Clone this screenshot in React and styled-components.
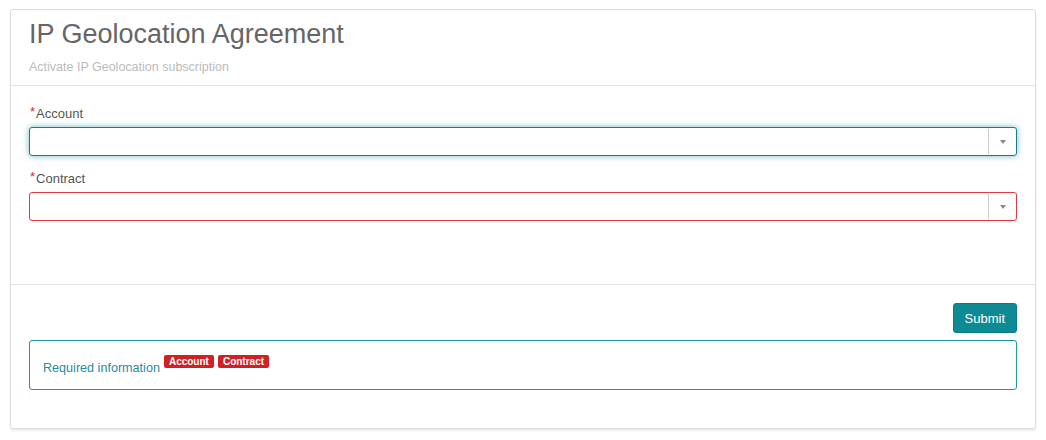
import React from "react";
import styled, { createGlobalStyle } from "styled-components";

const GlobalStyle = createGlobalStyle`
    body {
        margin: 0;
        background: #ffffff;
        font-family: "Liberation Sans", Arial, sans-serif;
    }
`;

const Page = styled.div`
    padding: 9px 10px 10px 10px;
`;

const Card = styled.div`
    border: 1px solid #dcdcdc;
    border-radius: 3px;
    background: #fff;
    box-shadow: 0 2px 2px rgba(0, 0, 0, 0.08);
`;

const Header = styled.div`
    padding: 8px 18px 0;
    height: 76px;
    box-sizing: border-box;
    border-bottom: 1px solid #e3e3e3;
`;

const Title = styled.h1`
    margin: 0;
    font-size: 27px;
    line-height: 32px;
    font-weight: normal;
    color: #666;
`;

const SubTitle = styled.div`
    margin-top: 9px;
    font-size: 12.5px;
    line-height: 16px;
    color: #bbb;
`;

const Body = styled.div`
    padding: 20px 18px 0;
    height: 199px;
    box-sizing: border-box;
    border-bottom: 1px solid #e3e3e3;
`;

const Field = styled.div`
    margin-bottom: 15px;
`;

const Label = styled.label`
    display: flex;
    align-items: flex-start;
    font-size: 13px;
    line-height: 16px;
    color: #555;
    margin-bottom: 5px;
    & > span {
        color: #d9262e;
        font-size: 13px;
        line-height: 12px;
        margin-right: 1px;
        margin-left: 1px;
    }
`;

const Select = styled.div`
    display: flex;
    height: 29px;
    box-sizing: border-box;
    border: 1px solid ${({ $invalid }) => ($invalid ? "#e23a3f" : "#177f8c")};
    border-radius: 3px;
    background: #fff;
    box-shadow: ${({ $focused }) =>
        $focused ? "0 0 6px rgba(0, 128, 140, 0.55)" : "none"};
`;

const SelectValue = styled.div`
    flex: 1;
`;

const Arrow = styled.div`
    width: 27px;
    border-left: 1px solid #ccc;
    margin: 1px 0;
    display: flex;
    align-items: center;
    justify-content: center;
    &::after {
        content: "";
        border-left: 3px solid transparent;
        border-right: 3px solid transparent;
        border-top: 4px solid #888;
    }
`;

const Footer = styled.div`
    padding: 18px 18px 38px;
    display: flex;
    flex-direction: column;
    align-items: flex-end;
    gap: 7px;
`;

const Button = styled.button`
    height: 30px;
    padding: 0 11px;
    border: 1px solid #0b7c86;
    border-radius: 3px;
    background: #0e8a94;
    color: #fff;
    font-family: inherit;
    font-size: 13px;
    cursor: pointer;
`;

const Notice = styled.div`
    align-self: stretch;
    height: 50px;
    box-sizing: border-box;
    border: 1px solid #1f97a6;
    border-radius: 3px;
    padding: 15px 13px 0;
    font-size: 12.6px;
    line-height: 24px;
    color: #2a8a9c;
`;

const Badge = styled.span`
    display: inline-block;
    vertical-align: top;
    margin-left: 4px;
    margin-top: -1px;
    padding: 0 5px;
    height: 13px;
    line-height: 13px;
    border-radius: 2px;
    background: #d11f26;
    color: #fff;
    font-size: 10px;
    font-weight: bold;
`;

export default function App() {
    return (
        <Page>
            <GlobalStyle />
            <Card>
                <Header>
                    <Title>IP Geolocation Agreement</Title>
                    <SubTitle>Activate IP Geolocation subscription</SubTitle>
                </Header>
                <Body>
                    <Field>
                        <Label>
                            <span>*</span>Account
                        </Label>
                        <Select $focused>
                            <SelectValue />
                            <Arrow />
                        </Select>
                    </Field>
                    <Field>
                        <Label>
                            <span>*</span>Contract
                        </Label>
                        <Select $invalid>
                            <SelectValue />
                            <Arrow />
                        </Select>
                    </Field>
                </Body>
                <Footer>
                    <Button>Submit</Button>
                    <Notice>
                        Required information
                        <Badge>Account</Badge>
                        <Badge>Contract</Badge>
                    </Notice>
                </Footer>
            </Card>
        </Page>
    );
}
